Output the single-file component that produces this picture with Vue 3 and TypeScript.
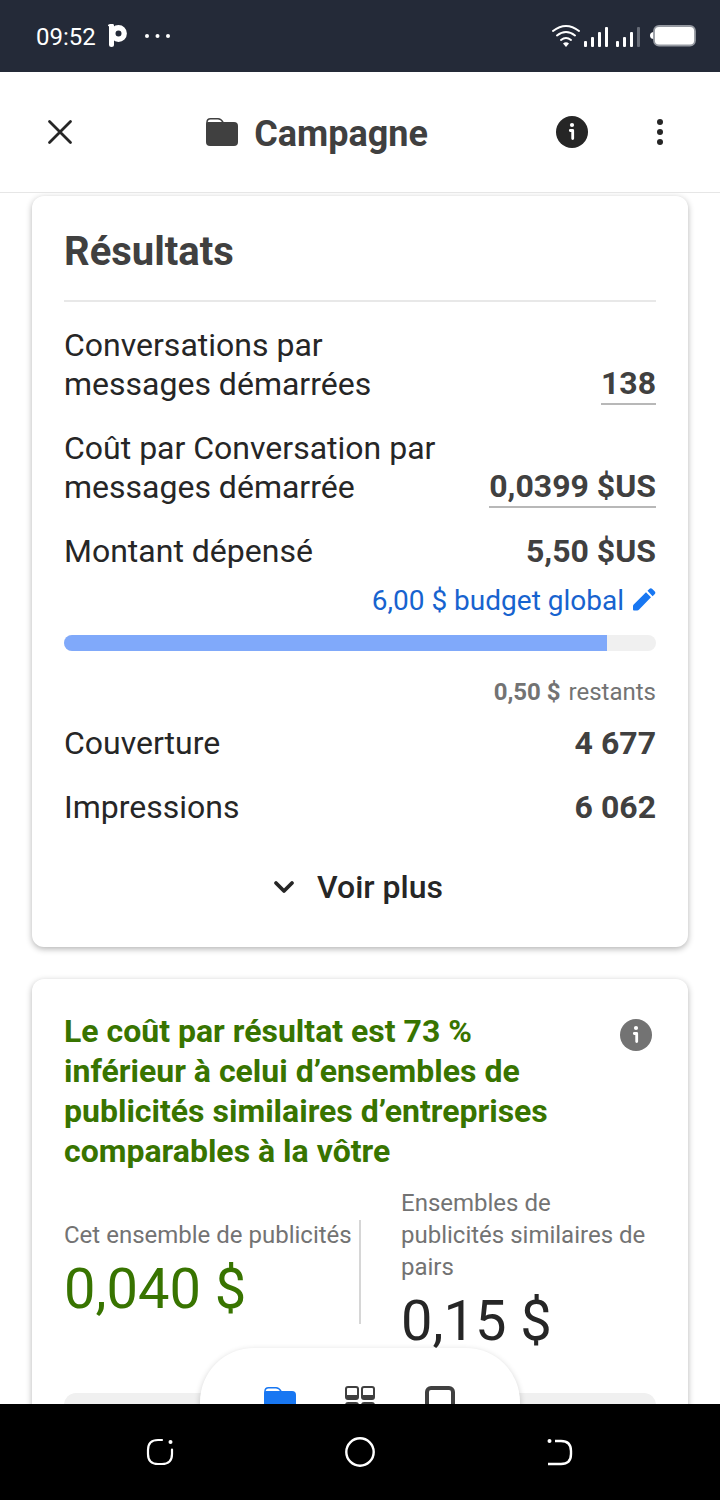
<script setup lang="ts">
import { computed, ref } from 'vue'

interface Metric {
  label: string
  value: string
  linked?: boolean
}

const delivery: Metric[] = [
  { label: 'Conversations par messages démarrées', value: '138', linked: true },
  { label: 'Coût par Conversation par messages démarrée', value: '0,0399 $US', linked: true },
  { label: 'Montant dépensé', value: '5,50 $US' },
]

const audience: Metric[] = [
  { label: 'Couverture', value: '4 677' },
  { label: 'Impressions', value: '6 062' },
]

const spent = ref(5.5)
const budget = ref(6)
const spentWidth = computed(() => `${(spent.value / budget.value) * 100}%`)
</script>

<template>
  <div class="screen">
    <div class="status">
      <div class="status-side">
        <span class="clock">09:52</span>
        <svg class="app-mark" width="20" height="24" viewBox="0 0 20 24" aria-hidden="true">
          <path d="M0 1.500C2.500 .5 4 1 5 2" fill="none" stroke="#fff" stroke-width="1.500" />
          <path d="M3.500 2v18.500" stroke="#fff" stroke-width="5" stroke-linecap="round" />
          <circle cx="10.500" cy="9.500" r="5.700" fill="none" stroke="#fff" stroke-width="5.400" />
        </svg>
        <svg class="more" width="26" height="4" viewBox="0 0 26 4" fill="#fff" aria-hidden="true">
          <circle cx="2" cy="2" r="2" /><circle cx="12.500" cy="2" r="2" /><circle cx="23" cy="2" r="2" />
        </svg>
      </div>
      <svg width="146" height="24" viewBox="0 0 146 24" fill="none" aria-hidden="true">
        <g stroke="#fff" stroke-width="2" stroke-linecap="round">
          <path d="M2 7Q15-3 28 7" />
          <path d="M6 11.500Q15 4.500 24 11.500" />
          <path d="M10 16Q15 12 20 16" />
        </g>
        <path d="M12 19.500Q15 17 18 19.500L15 23Z" fill="#fff" />
        <g fill="#fff">
          <rect x="33" y="17" width="3" height="6" rx="1" />
          <rect x="40" y="13" width="3" height="10" rx="1" />
          <rect x="47" y="8" width="3" height="15" rx="1" />
          <rect x="54" y="3" width="3" height="20" rx="1" />
          <rect x="65" y="17" width="3" height="6" rx="1" />
          <rect x="72" y="13" width="3" height="10" rx="1" />
          <rect x="79" y="8" width="3" height="15" rx="1" />
        </g>
        <rect x="86" y="3" width="3" height="20" rx="1" fill="#666b76" />
        <path d="M103 8q-4 0-4 3.500t4 3.500z" fill="#fff" />
        <rect x="103" y="2" width="41" height="19.500" rx="5" fill="#fff" stroke="#9599a1" stroke-width="1.800" />
      </svg>
    </div>

    <header class="header">
      <button class="icon-btn" type="button" aria-label="Fermer">
        <svg width="26" height="26" viewBox="0 0 26 26"><path d="M2.500 2.500l21 21M23.500 2.500l-21 21" stroke="#262626" stroke-width="2.800" stroke-linecap="round" /></svg>
      </button>
      <h1 class="title">
        <svg width="32" height="32" viewBox="0 0 32 32" aria-hidden="true">
          <path d="M1 8V6a3.500 3.500 0 0 1 3.500-3.300H12q3 0 5 3.500" fill="none" stroke="#404040" stroke-width="1.500" />
          <path d="M0 8q0-2 2-2h26q4 0 4 4v16q0 4-4 4H4q-4 0-4-4z" fill="#404040" />
        </svg>
        <span class="title-text">Campagne</span>
      </h1>
      <div class="actions">
        <button class="icon-btn" type="button" aria-label="Informations">
          <svg width="32" height="32" viewBox="0 0 32 32">
            <circle cx="16" cy="16" r="16" fill="#262626" />
            <circle cx="16" cy="9" r="2.100" fill="#fff" />
            <path d="M14.300 14.500h2.400v8" fill="none" stroke="#fff" stroke-width="2.800" stroke-linecap="round" stroke-linejoin="round" />
          </svg>
        </button>
        <button class="icon-btn" type="button" aria-label="Plus d’options">
          <svg width="8" height="28" viewBox="0 0 8 28" fill="#262626">
            <circle cx="4" cy="4" r="3" /><circle cx="4" cy="14" r="3" /><circle cx="4" cy="24" r="3" />
          </svg>
        </button>
      </div>
    </header>

    <main class="content">
      <section class="card results">
        <h2 class="card-title">Résultats</h2>
        <dl class="metrics">
          <div v-for="m in delivery" :key="m.label" class="metric">
            <dt>{{ m.label }}</dt>
            <dd :class="{ linked: m.linked }">{{ m.value }}</dd>
          </div>
        </dl>
        <div class="budget">
          <a class="budget-link" href="#budget">
            6,00 $ budget global
            <svg width="24" height="28" viewBox="0 0 24 28" fill="#1877f2" aria-hidden="true">
              <path d="M1 23.500v-4.200q0-1 .7-1.700L14 5.200l5 5L6.900 22.800q-.7.700-1.700.700H2q-1 0-1-1z" />
              <path d="M15.500 3.700l1.800-1.800q1.500-1.500 3 0l2.300 2.300q1.500 1.500 0 3l-2 2z" />
            </svg>
          </a>
          <div class="track" role="progressbar" aria-label="Budget dépensé" :aria-valuenow="spent" aria-valuemin="0" :aria-valuemax="budget">
            <div class="fill" :style="{ width: spentWidth }"></div>
          </div>
          <p class="remaining"><strong>0,50 $</strong><span>restants</span></p>
        </div>
        <dl class="metrics">
          <div v-for="m in audience" :key="m.label" class="metric">
            <dt>{{ m.label }}</dt>
            <dd>{{ m.value }}</dd>
          </div>
        </dl>
        <button class="show-more" type="button">
          <svg width="22" height="14" viewBox="0 0 22 14" fill="none" aria-hidden="true"><path d="M3 3l8 8 8-8" stroke="#262626" stroke-width="3.800" stroke-linecap="round" stroke-linejoin="round" /></svg>
          <span>Voir plus</span>
        </button>
      </section>

      <section class="card insight">
        <div class="insight-head">
          <h2 class="insight-title">Le coût par résultat est 73 % inférieur à celui d’ensembles de publicités similaires d’entreprises comparables à la vôtre</h2>
          <button class="icon-btn" type="button" aria-label="À propos de cette comparaison">
            <svg width="32" height="32" viewBox="0 0 32 32">
              <circle cx="16" cy="16" r="16" fill="#737373" />
              <circle cx="16" cy="9" r="2.100" fill="#fff" />
              <path d="M14.300 14.500h2.400v8" fill="none" stroke="#fff" stroke-width="2.800" stroke-linecap="round" stroke-linejoin="round" />
            </svg>
          </button>
        </div>
        <div class="compare">
          <div>
            <p class="compare-label">Cet ensemble de publicités</p>
            <p class="compare-value good">0,040 $</p>
          </div>
          <div class="divider"></div>
          <div class="peers">
            <p class="compare-label">Ensembles de publicités similaires de pairs</p>
            <p class="compare-value">0,15 $</p>
          </div>
        </div>
        <div class="panel"></div>
      </section>

      <nav class="tabs" aria-label="Niveaux">
        <button class="icon-btn" type="button" aria-label="Campagne">
          <svg width="32" height="32" viewBox="0 0 32 32">
            <path d="M1 7V5a3.500 3.500 0 0 1 3.500-3.300H12q3 0 5 3.500" fill="none" stroke="#1877f2" stroke-width="1.500" />
            <path d="M0 7q0-2 2-2h26q4 0 4 4v17q0 4-4 4H4q-4 0-4-4z" fill="#1877f2" />
          </svg>
        </button>
        <button class="icon-btn" type="button" aria-label="Ensembles de publicités">
          <svg width="32" height="32" viewBox="0 0 32 32">
            <g fill="#404040">
              <rect x="1" width="14" height="14" rx="3" /><rect x="17" width="14" height="14" rx="3" />
              <rect x="1" y="16" width="14" height="14" rx="3" /><rect x="17" y="16" width="14" height="14" rx="3" />
            </g>
            <g fill="#fff">
              <path d="M3 3q0-1 1-1h8q1 0 1 1v6H3zM19 3q0-1 1-1h8q1 0 1 1v6H19z" />
              <path d="M3 19q0-1 1-1h8q1 0 1 1v6H3zM19 19q0-1 1-1h8q1 0 1 1v6H19z" />
            </g>
          </svg>
        </button>
        <button class="icon-btn" type="button" aria-label="Publicités">
          <svg width="32" height="32" viewBox="0 0 32 32"><rect x="3" y="2" width="26" height="26" rx="4" fill="none" stroke="#404040" stroke-width="4" /></svg>
        </button>
      </nav>
    </main>

    <nav class="system-nav" aria-label="Système">
      <button type="button" aria-label="Applications récentes">
        <svg width="32" height="32" viewBox="0 0 32 32" fill="none" stroke="#fff" stroke-width="2.200" stroke-linecap="round">
          <path d="M18 4h-4Q4 4 4 14v4q0 10 10 10h4q10 0 10-10v-4.500" />
          <circle cx="26.500" cy="6" r="2" fill="#fff" stroke="none" />
        </svg>
      </button>
      <button type="button" aria-label="Accueil">
        <svg width="32" height="32" viewBox="0 0 32 32"><circle cx="16" cy="16" r="13.700" fill="none" stroke="#fff" stroke-width="2.400" /></svg>
      </button>
      <button type="button" aria-label="Retour">
        <svg width="32" height="32" viewBox="0 0 32 32" fill="none" stroke="#fff" stroke-width="2.400">
          <path d="M11 5h6q10 0 10 10v3q0 10-10 10H4" />
          <circle cx="5.500" cy="5" r="2" fill="#fff" stroke="none" />
        </svg>
      </button>
    </nav>
  </div>
</template>

<style>
body {
  margin: 0;
  background: #fff;
}
</style>

<style scoped>
.screen {
  display: flex;
  flex-direction: column;
  height: 100vh;
  background: #fff;
  color: #262626;
  font-family: Roboto, "Liberation Sans", sans-serif;
  font-size: 32px;
}
h1, h2, p, dl, dd {
  margin: 0;
}
svg {
  display: block;
  flex: none;
}
button {
  border: 0;
  padding: 0;
  background: none;
  color: inherit;
  font: inherit;
  cursor: pointer;
}
.status {
  display: flex;
  flex: none;
  align-items: center;
  justify-content: space-between;
  box-sizing: border-box;
  height: 72px;
  padding: 0 23px 0 36px;
  background: #242a38;
  color: #fff;
}
.status-side {
  display: flex;
  align-items: center;
}
.clock {
  padding-top: 2px;
  font-size: 24px;
  line-height: 32px;
}
.app-mark {
  margin-left: 12px;
}
.more {
  margin-left: 17px;
}
.header {
  display: flex;
  flex: none;
  align-items: center;
  height: 120px;
  padding: 0 40px;
  border-bottom: 1px solid #e6e6e6;
}
.icon-btn {
  display: flex;
  flex: none;
  align-items: center;
  justify-content: center;
  width: 40px;
  height: 40px;
}
.title {
  display: flex;
  flex: 1;
  align-items: center;
  justify-content: center;
  gap: 16px;
  padding-left: 2px;
  color: #404040;
  font-size: 36px;
  font-weight: 700;
  line-height: 44px;
}
.title-text {
  padding-top: 4px;
}
.actions {
  display: flex;
  gap: 48px;
}
.content {
  position: relative;
  display: flex;
  flex: 1;
  flex-direction: column;
  gap: 32px;
  min-height: 0;
  padding: 3px 32px 0;
  overflow: hidden;
}
.card {
  flex: none;
  padding: 32px;
  border-radius: 12px;
  background: #fff;
  box-shadow: 0 2px 6px rgba(0, 0, 0, 0.3);
}
.results {
  padding-bottom: 28px;
}
.card-title {
  padding-bottom: 24px;
  border-bottom: 2px solid #e8e8e8;
  color: #404040;
  font-size: 40px;
  font-weight: 700;
  line-height: 48px;
}
.metrics {
  display: flex;
  flex-direction: column;
  gap: 25px;
}
.card-title + .metrics {
  padding-top: 24px;
}
.metric {
  display: flex;
  align-items: flex-end;
  justify-content: space-between;
  gap: 24px;
  line-height: 39px;
}
.metric dt {
  max-width: 392px;
}
.metric dd {
  flex: none;
  color: #404040;
  font-weight: 700;
}
.metric .linked {
  margin-bottom: -1px;
  border-bottom: 2px solid #b8b8b8;
}
.budget {
  display: flex;
  flex-direction: column;
  padding: 12px 0 16px;
}
.budget-link {
  display: flex;
  align-items: center;
  align-self: flex-end;
  gap: 8px;
  color: #1763cf;
  font-size: 28px;
  line-height: 36px;
  text-decoration: none;
}
.track {
  height: 16px;
  margin: 16px 0 25px;
  border-radius: 8px;
  background: #f0f0f0;
  overflow: hidden;
}
.fill {
  height: 100%;
  background: #80a9fa;
}
.remaining {
  display: flex;
  justify-content: flex-end;
  gap: 8px;
  color: #737373;
  font-size: 24px;
  line-height: 32px;
}
.show-more {
  display: flex;
  align-items: center;
  justify-content: center;
  gap: 22px;
  width: 100%;
  height: 64px;
  margin-top: 28px;
  padding-right: 4px;
  font-weight: 500;
}
.insight-head {
  display: flex;
  align-items: flex-start;
  justify-content: space-between;
}
.insight-title {
  max-width: 520px;
  color: #387400;
  font-size: 32px;
  font-weight: 700;
  line-height: 40px;
}
.insight-head .icon-btn {
  margin-top: 4px;
}
.compare {
  display: grid;
  grid-template-columns: 1fr 2px 1fr;
  align-items: center;
  margin-top: 16px;
}
.divider {
  height: 104px;
  background: #d6d6d6;
}
.peers {
  padding-left: 40px;
}
.compare-label {
  color: #737373;
  font-size: 24px;
  line-height: 32px;
}
.compare-value {
  padding-top: 2px;
  font-size: 56px;
  line-height: 72px;
}
.good {
  color: #387400;
}
.panel {
  height: 96px;
  margin-top: 36px;
  border-radius: 12px;
  background: #f0f0f0;
}
.tabs {
  position: absolute;
  bottom: -52px;
  left: 50%;
  display: flex;
  align-items: center;
  justify-content: center;
  gap: 40px;
  width: 320px;
  height: 108px;
  border-radius: 56px;
  background: #fff;
  box-shadow: 0 2px 6px rgba(0, 0, 0, 0.2);
  transform: translateX(-50%);
}
.system-nav {
  display: flex;
  flex: none;
  align-items: center;
  box-sizing: border-box;
  height: 96px;
  padding: 0 60px;
  background: #000;
}
.system-nav button {
  display: flex;
  flex: 1;
  justify-content: center;
}
</style>
